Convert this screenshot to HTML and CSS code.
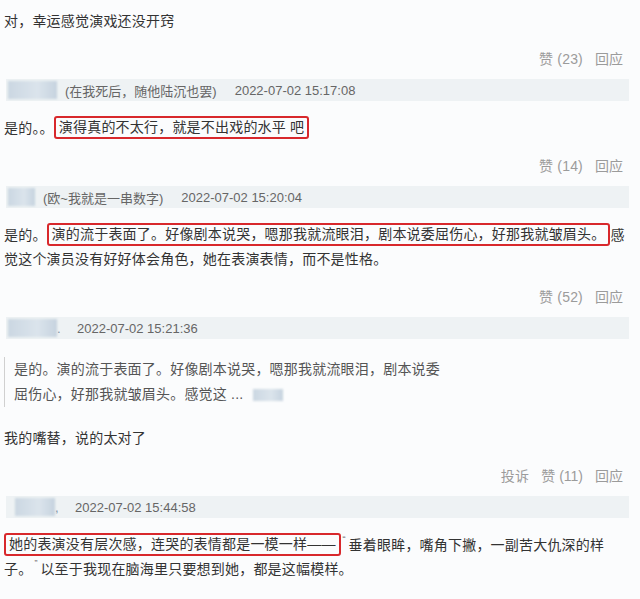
FILE: index.html
```html
<!DOCTYPE html>
<html lang="zh-CN">
<head>
  <meta charset="UTF-8" />
  <meta name="viewport" content="width=device-width, initial-scale=1" />
  <title>评论</title>
  <link rel="stylesheet" href="styles.css">
</head>
<body>

  <div class="thread">
    <p class="text first">对，幸运感觉演戏还没开窍</p>
    <div class="actions"><span>赞 (23)</span><span>回应</span></div>

    <!-- 评论 1 -->
    <div class="meta">
      <span class="blur blur-lg"></span>
      <span class="name">(在我死后，随他陆沉也罢)</span>
      <span class="date">2022-07-02 15:17:08</span>
    </div>
    <p class="text">是的。。<span class="mark">演得真的不太行，就是不出戏的水平 吧</span></p>
    <div class="actions"><span>赞 (14)</span><span>回应</span></div>

    <!-- 评论 2 -->
    <div class="meta">
      <span class="blur blur-sm"></span>
      <span class="name">(欧~我就是一串数字)</span>
      <span class="date">2022-07-02 15:20:04</span>
    </div>
    <p class="text">是的。<span class="mark">演的流于表面了。好像剧本说哭，嗯那我就流眼泪，剧本说委屈伤心，好那我就皱眉头。</span>感觉这个演员没有好好体会角色，她在表演表情，而不是性格。</p>
    <div class="actions"><span>赞 (52)</span><span>回应</span></div>

    <!-- 评论 3 -->
    <div class="meta">
      <span class="blur blur-lg"></span>
      <span class="dot">.</span>
      <span class="date">2022-07-02 15:21:36</span>
    </div>
    <blockquote class="quote">
      是的。演的流于表面了。好像剧本说哭，嗯那我就流眼泪，剧本说委<br>
      屈伤心，好那我就皱眉头。感觉这 ... <span class="blur blur-xs"></span>
    </blockquote>
    <p class="text reply">我的嘴替，说的太对了</p>
    <div class="actions"><span>投诉</span><span>赞 (11)</span><span>回应</span></div>

    <!-- 评论 4 -->
    <div class="meta">
      <span class="blur blur-md"></span>
      <span class="dot">,</span>
      <span class="date">2022-07-02 15:44:58</span>
    </div>
    <p class="text"><span class="mark">她的表演没有层次感，连哭的表情都是一模一样——</span><span class="q">“</span>垂着眼眸，嘴角下撇，一副苦大仇深的样子。<span class="q">”</span>以至于我现在脑海里只要想到她，都是这幅模样。</p>
  </div>

</body>
</html>
```

FILE: styles.css
```css
* {
  box-sizing: border-box;
}
body {
  margin: 0;
  background: #fbfcfd;
  font-family: 'Liberation Sans', 'Noto Sans CJK SC', sans-serif;
  color: #333;
}
.thread {
  width: 630px;
  padding: 9px 0 0 4px;
}
.text {
  margin: 15px 0 0;
  font-size: 14px;
  line-height: 24px;
  letter-spacing: 0.2px;
}
.text.first {
  margin-top: 0;
}
.text.reply {
  margin-top: 19px;
}
.mark {
  display: inline-block;
  vertical-align: top;
  line-height: 19px;
  padding: 0 3px;
  border: 2px solid #d8282c;
  border-radius: 3px;
}
.q {
  display: inline-block;
  width: 8px;
  padding-left: 2px;
  font-size: 9px;
  line-height: 12px;
  vertical-align: top;
  color: #777;
}
.actions {
  display: flex;
  justify-content: flex-end;
  gap: 12px;
  margin-top: 14px;
  padding-right: 7px;
  font-size: 14px;
  line-height: 24px;
  color: #9b9b9b;
}
.actions span:first-child {
  letter-spacing: 0.2px;
}
.meta {
  display: flex;
  align-items: center;
  height: 22px;
  margin: 8px 0 0 2px;
  padding-left: 2px;
  width: 623px;
  background: #eef2f4;
  font-size: 13px;
  color: #666;
}
.name {
  margin-left: 8px;
}
.date {
  margin-left: 18px;
}
.dot {
  width: 2px;
  color: #7d8fa3;
}
.blur {
  display: inline-block;
  height: 18px;
  background: linear-gradient(90deg, #cbd7e2, #dbe4ec 60%, #c6d3df);
  filter: blur(1px);
}
.blur-lg { width: 49px; }
.blur-sm { width: 27px; }
.blur-md { width: 40px; margin-left: 7px; }
.blur-xs {
  width: 30px;
  height: 12px;
  vertical-align: middle;
  margin-left: 6px;
}
.quote {
  margin: 18px 0 0;
  padding-left: 9px;
  border-left: 1px solid #d0d0d0;
  font-size: 14px;
  line-height: 25px;
  letter-spacing: 0.2px;
  color: #555;
}
```
